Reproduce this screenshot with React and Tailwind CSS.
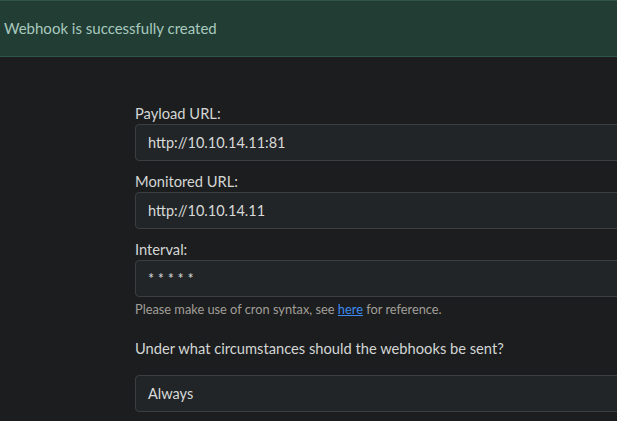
import React from 'react';

const font = { fontFamily: 'Lato, "Noto Sans", sans-serif' };

const Field = ({ label, value, children }) => (
    <div>
        <label className="block text-[14.7px] leading-[20px] text-[#d3d6d4] mb-[1px]">{label}</label>
        <div className="h-[37px] flex items-center px-[12px] bg-[#222527] border border-[#3a3f41] rounded-[4px] text-[14.5px] text-[#d8dad9]">
            {value}
        </div>
        {children}
    </div>
);

export default function App() {
    return (
        <div style={font} className="w-[617px] h-[421px] overflow-hidden bg-[#1c1d1f]">
            <div className="h-[57px] flex items-center pl-[4px] bg-[#213d34] border-y border-[#2f5747] text-[15px] text-[#a8c9be]">
                Webhook is successfully created
            </div>
            <div className="pl-[135px] pt-[46px] w-[700px] flex flex-col gap-[10px]">
                <Field label="Payload URL:" value="http://10.10.14.11:81" />
                <Field label="Monitored URL:" value="http://10.10.14.11" />
                <Field label="Interval:" value="* * * * *">
                    <p className="mt-[4px] leading-[16px] text-[12.8px] text-[#a19f99]">
                        Please make use of cron syntax, see <a href="#" className="text-[#3b8df1] underline">here</a> for reference.
                    </p>
                </Field>
                <p className="mt-[11px] leading-[20px] text-[14.7px] text-[#d3d6d4]">Under what circumstances should the webhooks be sent?</p>
                <div className="mt-[7px] h-[37px] flex items-center px-[12px] bg-[#222527] border border-[#3a3f41] rounded-[4px] text-[14.5px] text-[#d8dad9]">
                    Always
                </div>
            </div>
        </div>
    );
}
